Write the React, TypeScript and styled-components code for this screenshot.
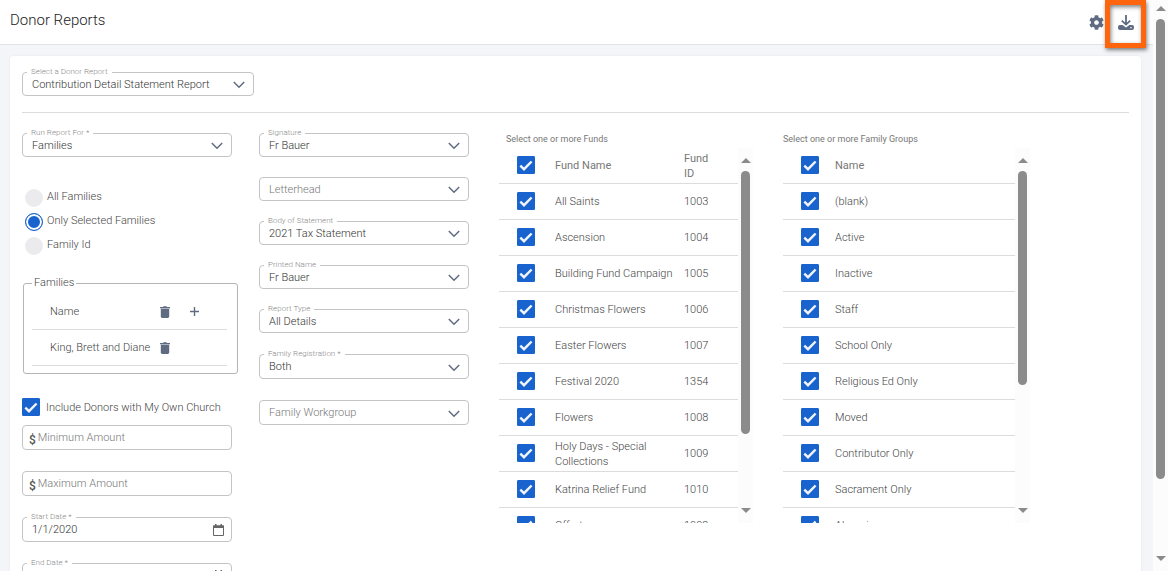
import React from 'react';
import styled, { createGlobalStyle, css } from 'styled-components';
import { FaCog } from 'react-icons/fa';

const GlobalStyle = createGlobalStyle`
  *, *::before, *::after { box-sizing: border-box; }
  body {
    margin: 0;
    background: #f4f5f8;
    color: #444;
    font: 300 11px/15px Roboto, "Liberation Sans", sans-serif;
  }
  input, select, button { font: inherit; color: inherit; }
`;

const Shell = styled.div`
  display: flex;
  height: 100vh;
  overflow: hidden;
`;

const Main = styled.main`
  flex: 1;
  min-width: 0;
  display: flex;
  flex-direction: column;
`;

const Header = styled.header`
  flex: none;
  display: flex;
  align-items: center;
  justify-content: space-between;
  height: 45px;
  padding: 0 19px 0 10px;
  background: #fff;
  border-bottom: 1px solid #e2e3e6;
`;

const Title = styled.h1`
  margin: 0;
  padding-bottom: 4px;
  font-size: 15px;
  line-height: 20px;
  font-weight: 300;
  color: #222;
`;

const Actions = styled.div`
  display: flex;
  align-items: center;
  gap: 14px;
`;

const IconButton = styled.button`
  position: relative;
  display: flex;
  align-items: center;
  justify-content: center;
  padding: 0;
  border: 0;
  background: none;
  color: #5f6b80;
`;

const Highlight = styled.span`
  position: absolute;
  top: -14px;
  left: -13px;
  width: 41px;
  height: 48px;
  border: 5px solid #ff650d;
  box-shadow: 1px 2px 4px rgba(0, 0, 0, 0.5), inset 1px 2px 4px rgba(0, 0, 0, 0.5);
  pointer-events: none;
`;

const Card = styled.section`
  flex: 1 0 auto;
  margin: 11px 12px 0 10px;
  padding: 16px 12px;
  background: #fff;
  border-radius: 3px;
  box-shadow: 0 0 2px rgba(0, 0, 0, 0.08);
`;

const ReportPicker = styled.div`
  width: 232px;
`;

const Divider = styled.hr`
  margin: 16px 0 20px;
  border: 0;
  border-top: 1px solid #dcdcdc;
`;

const Columns = styled.div`
  display: grid;
  grid-template-columns:
    minmax(0, 237fr) minmax(0, 240fr) minmax(0, 284fr) minmax(0, 346fr);
  align-items: start;
`;

const Column = styled.div<{ $right?: number; $gap?: number }>`
  display: flex;
  flex-direction: column;
  gap: ${(p) => p.$gap ?? 0}px;
  padding-right: ${(p) => p.$right ?? 0}px;
`;

const FieldStack = styled.div<{ $gap: number }>`
  display: flex;
  flex-direction: column;
  gap: ${(p) => p.$gap}px;
`;

const FieldBox = styled.div<{ $tall?: boolean }>`
  position: relative;
  display: flex;
  align-items: center;
  height: ${(p) => (p.$tall ? 25 : 24)}px;
  border: 1px solid #c4c4c4;
  border-radius: 4px;
  background: #fff;
`;

const FieldLabel = styled.label`
  position: absolute;
  top: -6px;
  left: 4px;
  padding: 0 4px;
  background: #fff;
  color: #8a8a8a;
  font-size: 8px;
  line-height: 10px;
`;

const control = css`
  width: 100%;
  height: 100%;
  margin: 0;
  padding: 0 30px 0 9px;
  border: 0;
  border-radius: 4px;
  outline: 0;
  background: none;
  line-height: 15px;
`;

const SelectControl = styled.select<{ $empty?: boolean }>`
  ${control}
  appearance: none;
  color: ${(p) => (p.$empty ? '#777' : '#333')};
`;

const TextControl = styled.input<{ $money?: boolean }>`
  ${control}
  padding-left: ${(p) => (p.$money ? 2 : 9)}px;
  color: #333;
  &::placeholder { color: #777; opacity: 1; }
`;

const Currency = styled.span`
  padding: 5px 0 0 6px;
  font-size: 12px;
  font-weight: 500;
  color: #555;
`;

const EndIcon = styled.span`
  position: absolute;
  top: 0;
  right: 8px;
  height: 100%;
  display: flex;
  align-items: center;
  padding-top: 2px;
  color: #5f6b80;
  pointer-events: none;
`;

const CalendarButton = styled.button`
  display: flex;
  margin-right: 7px;
  padding: 0;
  border: 0;
  background: none;
  color: #666;
`;

const RadioList = styled.div`
  display: flex;
  flex-direction: column;
  margin: 29px 0 18px;
  padding-left: 3px;
`;

const RadioRow = styled.label`
  display: flex;
  align-items: center;
  gap: 4px;
  height: 24px;
`;

const RadioText = styled.span`
  padding-bottom: 3px;
`;

const Radio = styled.input`
  appearance: none;
  width: 18px;
  height: 18px;
  margin: 0;
  border-radius: 50%;
  background: #ebebed;
  &:checked {
    border: 1px solid #1963cf;
    background: #1963cf;
    box-shadow: inset 0 0 0 2px #fff;
  }
`;

const FamilyBox = styled.fieldset`
  margin: 0 0 24px 1px;
  padding: 4px 10px 7px 8px;
  border: 1px solid #b5b5b5;
  border-radius: 3px;
`;

const FamilyLegend = styled.legend`
  padding: 0 2px;
  line-height: 14px;
`;

const FamilyTable = styled.table`
  width: 100%;
  table-layout: fixed;
  border-spacing: 0;
`;

const FamilyCell = styled.td<{ $name?: boolean; $width?: number }>`
  width: ${(p) => (p.$width ? `${p.$width}px` : 'auto')};
  height: 36px;
  padding: 0 0 0 ${(p) => (p.$name ? 18 : 0)}px;
  border-bottom: 1px solid #dcdcdc;
  white-space: nowrap;
`;

const CheckRow = styled.label`
  display: flex;
  align-items: center;
  gap: 6px;
  margin-bottom: 9px;
`;

const CheckWrap = styled.span`
  position: relative;
  display: flex;
  flex: none;
  width: 18px;
  height: 18px;
`;

const CheckInput = styled.input`
  appearance: none;
  width: 18px;
  height: 18px;
  margin: 0;
  border: 1px solid #1963cf;
  border-radius: 1px;
  background: #fff;
  &:checked { background: #1963cf; }
`;

const CheckMark = styled.svg`
  position: absolute;
  inset: 0;
  pointer-events: none;
`;

const Inset = styled.div`
  padding-right: 6px;
`;

const ListCaption = styled.div<{ $indent?: boolean }>`
  padding: 0 0 3px ${(p) => (p.$indent ? 7 : 0)}px;
  font-size: 9px;
  line-height: 12px;
  font-weight: 400;
  color: #777;
`;

const ListFrame = styled.div`
  display: flex;
  height: 375px;
`;

const ListView = styled.div`
  flex: 1;
  min-width: 0;
  overflow: hidden;
`;

const ListTable = styled.table`
  width: 100%;
  table-layout: fixed;
  border-spacing: 0;
`;

const cell = css<{ $check?: boolean }>`
  height: 36px;
  padding: ${(p) => (p.$check ? '0 0 1px 18px' : '0')};
  border-bottom: 1px solid #dcdcdc;
  text-align: left;
  vertical-align: middle;
`;

const HeadCell = styled.th<{ $width?: number; $check?: boolean }>`
  ${cell}
  width: ${(p) => (p.$width ? `${p.$width}px` : 'auto')};
  font-weight: 400;
  color: #777;
`;

const IdHeadCell = styled(HeadCell)`
  padding-right: 20px;
`;

const Cell = styled.td<{ $check?: boolean }>`
  ${cell}
`;

const Track = styled.div<{ $page?: boolean }>`
  flex: none;
  display: flex;
  flex-direction: column;
  align-items: center;
  width: 15px;
  padding: ${(p) => (p.$page ? '6px 0 10px' : '10px 0')};
  background: #fcfcfc;
`;

const Thumb = styled.div<{ $percent: number }>`
  flex: 0 0 ${(p) => p.$percent}%;
  width: 9px;
  border-radius: 5px;
  background: #8b8b8b;
`;

const Arrow = styled.span<{ $down?: boolean }>`
  border: 5px solid transparent;
  border-top: ${(p) => (p.$down ? '5px solid #8b8b8b' : '0')};
  border-bottom: ${(p) => (p.$down ? '0' : '5px solid #8b8b8b')};
`;

const ThumbArea = styled.div`
  flex: 1;
  display: flex;
  flex-direction: column;
  padding: 8px 0;
`;

function Scrollbar({ percent, page }: { percent: number; page?: boolean }) {
  return (
    <Track $page={page} aria-hidden="true">
      <Arrow />
      <ThumbArea>
        <Thumb $percent={percent} />
      </ThumbArea>
      <Arrow $down />
    </Track>
  );
}

function Chevron() {
  return (
    <svg width="12" height="8" viewBox="0 0 12 8" fill="none" stroke="currentColor" strokeWidth="1.5">
      <path d="M.8 1 6 6.2 11.200 1" />
    </svg>
  );
}

function DownloadIcon() {
  return (
    <svg width="16" height="17" viewBox="0 0 16 17" fill="none">
      <path d="M8 1v9M3.8 6.6 8 10.6l4.2-4" stroke="currentColor" strokeWidth="1.8" />
      <path
        fillRule="evenodd"
        fill="currentColor"
        d="M2 11h2.6L8 13.6 11.4 11H14a2 2 0 0 1 2 2v1a2 2 0 0 1-2 2H2a2 2 0 0 1-2-2v-1a2 2 0 0 1 2-2Zm11 1.9a.8.8 0 1 0 0 1.6.8.8 0 0 0 0-1.6Z"
      />
    </svg>
  );
}

function TrashIcon() {
  return (
    <svg width="10" height="12" viewBox="0 0 10 12" fill="currentColor">
      <path d="M0 1h3l.6-.8h2.8L7 1h3v1.2H0ZM.8 2.800h8.4v7.8A1.4 1.4 0 0 1 7.800 12H2.200A1.400 1.400 0 0 1 .8 10.600Z" />
    </svg>
  );
}

function PlusIcon() {
  return (
    <svg width="9" height="9" viewBox="0 0 9 9" stroke="currentColor" strokeWidth="1.4">
      <path d="M4.500 0v9M0 4.500h9" />
    </svg>
  );
}

function CalendarIcon() {
  return (
    <svg width="11" height="12" viewBox="0 0 11 12">
      <path d="M.5 2h10v9.500H.5Z" fill="none" stroke="currentColor" />
      <path d="M0 1.500h11V4H0ZM2 0h1.500v2H2ZM7.500 0H9v2H7.500Z" fill="currentColor" />
    </svg>
  );
}

function Checkbox({ id, label }: { id?: string; label?: string }) {
  return (
    <CheckWrap>
      <CheckInput type="checkbox" id={id} aria-label={label} defaultChecked />
      <CheckMark width="18" height="18" viewBox="0 0 18 18" fill="none" stroke="#f2f4f7" strokeWidth="2.4">
        <path d="M3.300 9.600 7 13.200 14.600 5.500" />
      </CheckMark>
    </CheckWrap>
  );
}

function SelectField(props: { id: string; label: string; value?: string; tall?: boolean }) {
  const { id, label, value, tall } = props;
  return (
    <FieldBox $tall={tall}>
      {value && <FieldLabel htmlFor={id}>{label}</FieldLabel>}
      <SelectControl id={id} $empty={!value} aria-label={value ? undefined : label}>
        <option>{value ?? label}</option>
      </SelectControl>
      <EndIcon>
        <Chevron />
      </EndIcon>
    </FieldBox>
  );
}

function MoneyField({ id, label }: { id: string; label: string }) {
  return (
    <FieldBox $tall>
      <Currency>$</Currency>
      <TextControl $money id={id} placeholder={label} aria-label={label} />
    </FieldBox>
  );
}

function DateField({ id, label, value }: { id: string; label: string; value: string }) {
  return (
    <FieldBox $tall>
      <FieldLabel htmlFor={id}>{label}</FieldLabel>
      <TextControl id={id} defaultValue={value} />
      <CalendarButton type="button" aria-label={`Choose ${label}`}>
        <CalendarIcon />
      </CalendarButton>
    </FieldBox>
  );
}

const funds: [string, string][] = [
  ['All Saints', '1003'],
  ['Ascension', '1004'],
  ['Building Fund Campaign', '1005'],
  ['Christmas Flowers', '1006'],
  ['Easter Flowers', '1007'],
  ['Festival 2020', '1354'],
  ['Flowers', '1008'],
  ['Holy Days - Special Collections', '1009'],
  ['Katrina Relief Fund', '1010'],
  ['Offertory', '1002'],
];

const groups = [
  '(blank)',
  'Active',
  'Inactive',
  'Staff',
  'School Only',
  'Religious Ed Only',
  'Moved',
  'Contributor Only',
  'Sacrament Only',
  'Alumni',
];

export default function App() {
  return (
    <Shell>
      <GlobalStyle />
      <Main>
        <Header>
          <Title>Donor Reports</Title>
          <Actions>
            <IconButton type="button" aria-label="Settings">
              <FaCog size={15} />
            </IconButton>
            <IconButton type="button" aria-label="Download">
              <DownloadIcon />
              <Highlight />
            </IconButton>
          </Actions>
        </Header>
        <Card>
          <ReportPicker>
            <SelectField id="report" label="Select a Donor Report" value="Contribution Detail Statement Report" />
          </ReportPicker>
          <Divider />
          <Columns>
            <Column $right={21}>
              <Inset>
                <SelectField id="run-for" label="Run Report For *" value="Families" />
              </Inset>
              <RadioList role="radiogroup" aria-label="Families to include">
                <RadioRow>
                  <Radio type="radio" name="scope" />
                  <RadioText>All Families</RadioText>
                </RadioRow>
                <RadioRow>
                  <Radio type="radio" name="scope" defaultChecked />
                  <RadioText>Only Selected Families</RadioText>
                </RadioRow>
                <RadioRow>
                  <Radio type="radio" name="scope" />
                  <RadioText>Family Id</RadioText>
                </RadioRow>
              </RadioList>
              <FamilyBox>
                <FamilyLegend>Families</FamilyLegend>
                <FamilyTable>
                  <tbody>
                    <tr>
                      <FamilyCell $name $width={128}>Name</FamilyCell>
                      <FamilyCell $width={30}>
                        <IconButton type="button" aria-label="Remove all families">
                          <TrashIcon />
                        </IconButton>
                      </FamilyCell>
                      <FamilyCell>
                        <IconButton type="button" aria-label="Add a family">
                          <PlusIcon />
                        </IconButton>
                      </FamilyCell>
                    </tr>
                    <tr>
                      <FamilyCell $name>King, Brett and Diane</FamilyCell>
                      <FamilyCell>
                        <IconButton type="button" aria-label="Remove King, Brett and Diane">
                          <TrashIcon />
                        </IconButton>
                      </FamilyCell>
                      <FamilyCell />
                    </tr>
                  </tbody>
                </FamilyTable>
              </FamilyBox>
              <Inset>
                <CheckRow htmlFor="own-church">
                  <Checkbox id="own-church" />
                  Include Donors with My Own Church
                </CheckRow>
                <FieldStack $gap={21}>
                  <MoneyField id="min-amount" label="Minimum Amount" />
                  <MoneyField id="max-amount" label="Maximum Amount" />
                  <DateField id="start-date" label="Start Date *" value="1/1/2020" />
                  <DateField id="end-date" label="End Date *" value="12/31/2020" />
                </FieldStack>
              </Inset>
            </Column>

            <Column $right={30} $gap={21}>
              <FieldStack $gap={20}>
                <SelectField id="signature" label="Signature" value="Fr Bauer" />
                <SelectField id="letterhead" label="Letterhead" />
                <SelectField id="body" label="Body of Statement" value="2021 Tax Statement" />
                <SelectField id="printed-name" label="Printed Name" value="Fr Bauer" />
                <SelectField id="report-type" label="Report Type" value="All Details" />
              </FieldStack>
              <FieldStack $gap={21}>
                <SelectField id="registration" label="Family Registration *" value="Both" tall />
                <SelectField id="workgroup" label="Family Workgroup" tall />
              </FieldStack>
            </Column>

            <Column $right={30}>
              <ListCaption $indent>Select one or more Funds</ListCaption>
              <ListFrame>
                <ListView>
                  <ListTable>
                    <thead>
                      <tr>
                        <HeadCell $width={56} $check>
                          <Checkbox label="Select all funds" />
                        </HeadCell>
                        <HeadCell>Fund Name</HeadCell>
                        <IdHeadCell $width={54}>Fund ID</IdHeadCell>
                      </tr>
                    </thead>
                    <tbody>
                      {funds.map(([name, id]) => (
                        <tr key={id}>
                          <Cell $check>
                            <Checkbox label={name} />
                          </Cell>
                          <Cell>{name}</Cell>
                          <Cell>{id}</Cell>
                        </tr>
                      ))}
                    </tbody>
                  </ListTable>
                </ListView>
                <Scrollbar percent={80} />
              </ListFrame>
            </Column>

            <Column $right={99}>
              <ListCaption>Select one or more Family Groups</ListCaption>
              <ListFrame>
                <ListView>
                  <ListTable>
                    <thead>
                      <tr>
                        <HeadCell $width={52} $check>
                          <Checkbox label="Select all family groups" />
                        </HeadCell>
                        <HeadCell>Name</HeadCell>
                      </tr>
                    </thead>
                    <tbody>
                      {groups.map((name) => (
                        <tr key={name}>
                          <Cell $check>
                            <Checkbox label={name} />
                          </Cell>
                          <Cell>{name}</Cell>
                        </tr>
                      ))}
                    </tbody>
                  </ListTable>
                </ListView>
                <Scrollbar percent={65} />
              </ListFrame>
            </Column>
          </Columns>
        </Card>
      </Main>
      <Scrollbar percent={87} page />
    </Shell>
  );
}
